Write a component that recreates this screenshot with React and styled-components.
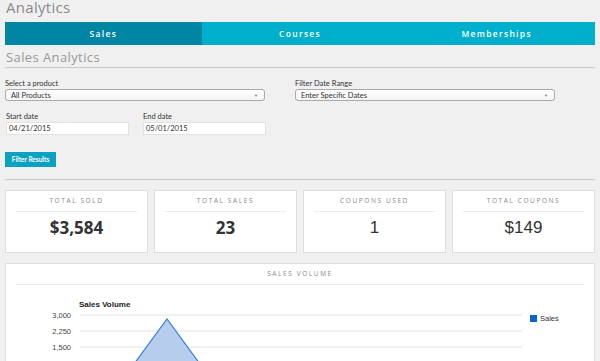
import React from "react";
import styled, { createGlobalStyle } from "styled-components";

const GlobalStyle = createGlobalStyle`
  body {
    margin: 0;
    background: #f0f0f0;
    font-family: "Open Sans", "Liberation Sans", sans-serif;
  }
`;

const tabs = ["Sales", "Courses", "Memberships"];

const stats = [
  { label: "Total Sold", value: "$3,584", bold: true },
  { label: "Total Sales", value: "23", bold: true },
  { label: "Coupons Used", value: "1" },
  { label: "Total Coupons", value: "$149" },
];

const SalesChart = () => {
  const ticks = [
    { label: "3,000", y: 30 },
    { label: "2,250", y: 46 },
    { label: "1,500", y: 62 },
    { label: "750", y: 78 },
  ];
  return (
    <svg width="590" height="96" style={{ display: "block" }}>
      <text x="73" y="22" fontFamily="Liberation Sans, sans-serif" fontSize="8" fontWeight="bold" fill="#222">
        Sales Volume
      </text>
      {ticks.map((t) => (
        <g key={t.label}>
          <line x1="74" x2="516" y1={t.y} y2={t.y} stroke="#e2e2e2" strokeWidth="1" />
          <text x="65" y={t.y + 3} textAnchor="end" fontFamily="Liberation Sans, sans-serif" fontSize="7.5" fill="#444">
            {t.label}
          </text>
        </g>
      ))}
      <polygon points="117,94 161,34 205,94" fill="#b7cdee" stroke="#3a7dd8" strokeWidth="1.2" />
      <rect x="524" y="30" width="7" height="7" fill="#0b64c8" />
      <text x="534" y="36" fontFamily="Liberation Sans, sans-serif" fontSize="7.5" fill="#333">
        Sales
      </text>
    </svg>
  );
};

const App = () => (
  <>
    <GlobalStyle />
    <Page>
      <Title>Analytics</Title>
      <TabBar>
        {tabs.map((t, i) => (
          <Tab key={t} active={i === 0}>
            {t}
          </Tab>
        ))}
      </TabBar>
      <SubTitle>Sales Analytics</SubTitle>
      <Form>
        <Field>
          <Label>Select a product</Label>
          <Select>
            <span>All Products</span>
            <Caret>▼</Caret>
          </Select>
        </Field>
        <Field>
          <Label>Filter Date Range</Label>
          <Select>
            <span>Enter Specific Dates</span>
            <Caret>▼</Caret>
          </Select>
        </Field>
        <DateRow>
          <Field>
            <Label>Start date</Label>
            <Input>04/21/2015</Input>
          </Field>
          <Field>
            <Label>End date</Label>
            <Input>05/01/2015</Input>
          </Field>
        </DateRow>
      </Form>
      <Button>Filter Results</Button>
      <Rule />
      <Stats>
        {stats.map((s) => (
          <Card key={s.label}>
            <CardLabel>{s.label}</CardLabel>
            <CardValue bold={s.bold}>{s.value}</CardValue>
          </Card>
        ))}
      </Stats>
      <Panel>
        <CardLabel>Sales Volume</CardLabel>
        <SalesChart />
      </Panel>
    </Page>
  </>
);

export default App;

const Page = styled.div`
  padding: 0 5px;
  height: 361px;
  overflow: hidden;
`;

const Title = styled.h1`
  margin: 0;
  font-size: 15px;
  font-weight: 400;
  line-height: 15px;
  height: 22px;
  color: #8a8a8a;
  letter-spacing: 0.3px;
  padding-left: 1px;
`;

const TabBar = styled.div`
  display: grid;
  grid-template-columns: repeat(3, 1fr);
  height: 23px;
`;

const Tab = styled.div`
  display: flex;
  align-items: center;
  justify-content: center;
  background: ${(p) => (p.active ? "#0085a3" : "#00afcb")};
  color: #fff;
  font-size: 8.5px;
  font-weight: 600;
  letter-spacing: 1.3px;
`;

const SubTitle = styled.h2`
  margin: 4px 0 0;
  font-size: 13px;
  font-weight: 400;
  line-height: 17px;
  color: #999;
  letter-spacing: 0.4px;
  padding: 0 0 1px 1px;
  border-bottom: 1px solid #c8c8c8;
`;

const Form = styled.div`
  display: grid;
  grid-template-columns: 260px 260px;
  column-gap: 30px;
  row-gap: 11px;
  margin-top: 11px;
  font-family: Lato, "Liberation Sans", sans-serif;
`;

const Field = styled.div`
  display: flex;
  flex-direction: column;
`;

const Label = styled.label`
  font-size: 7.5px;
  color: #333;
  line-height: 9px;
  margin-bottom: 1px;
`;

const Select = styled.div`
  display: flex;
  justify-content: space-between;
  align-items: center;
  height: 10px;
  padding: 0 6px 0 5px;
  border: 1px solid #aaa;
  border-radius: 3px;
  background: linear-gradient(#fff, #f4f4f4);
  font-size: 7.5px;
  color: #333;
`;

const Caret = styled.span`
  font-size: 4px;
  color: #777;
`;

const DateRow = styled.div`
  display: grid;
  grid-template-columns: 123px 123px;
  column-gap: 14px;
  padding-left: 1px;
`;

const Input = styled.div`
  height: 11px;
  border: 1px solid #e2e2e2;
  background: #fff;
  font-size: 7.5px;
  color: #333;
  line-height: 11px;
  padding-left: 2px;
`;

const Button = styled.button`
  display: block;
  margin-top: 17px;
  height: 15px;
  width: 51px;
  padding: 0;
  border: none;
  background: #0ba2c0;
  color: #fff;
  font-family: Lato, "Liberation Sans", sans-serif;
  font-weight: 700;
  font-size: 6.5px;
`;

const Rule = styled.hr`
  margin: 12px 0 0;
  border: none;
  border-top: 1px solid #c8c8c8;
`;

const Stats = styled.div`
  display: grid;
  grid-template-columns: repeat(4, 1fr);
  gap: 6px;
  margin-top: 10px;
`;

const Card = styled.div`
  background: #fff;
  border: 1px solid #dedede;
  height: 63px;
  padding: 0 10px;
  box-sizing: border-box;
`;

const CardLabel = styled.div`
  text-transform: uppercase;
  text-align: center;
  font-size: 6.5px;
  letter-spacing: 1.6px;
  color: #888;
  line-height: 8px;
  padding: 6px 0 6px;
  border-bottom: 1px solid #ececec;
`;

const CardValue = styled.div`
  text-align: center;
  font-family: ${(p) => (p.bold ? `"Open Sans", sans-serif` : `"Liberation Sans", sans-serif`)};
  font-weight: ${(p) => (p.bold ? 700 : 400)};
  font-size: 17px;
  line-height: 23px;
  color: #333;
  margin-top: 4px;
`;

const Panel = styled.div`
  margin-top: 10px;
  background: #fff;
  border: 1px solid #dedede;
  padding: 0 10px;
  height: 120px;
  & > svg {
    margin-left: -10px;
  }
`;
